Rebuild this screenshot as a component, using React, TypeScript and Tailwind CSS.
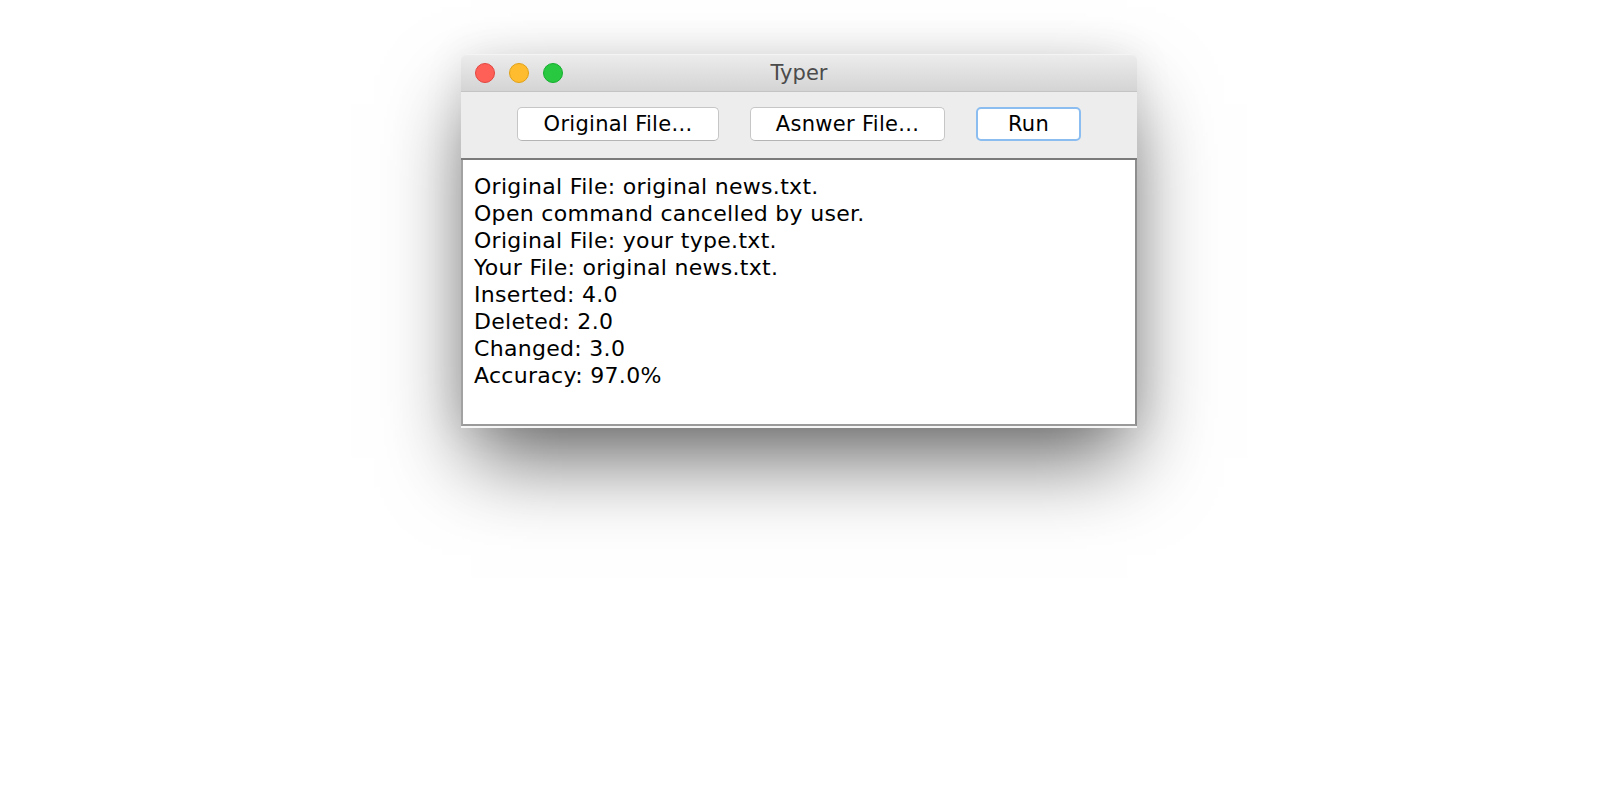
import React from 'react';

// Log lines shown in the output area of the Typer window.
const logLines = [
  'Original File: original news.txt.',
  'Open command cancelled by user.',
  'Original File: your type.txt.',
  'Your File: original news.txt.',
  'Inserted: 4.0',
  'Deleted: 2.0',
  'Changed: 3.0',
  'Accuracy: 97.0%',
];

const font = { fontFamily: '"DejaVu Sans", "Liberation Sans", sans-serif' };

const TrafficLights: React.FC = () => (
  <div className="flex items-center gap-[14px] pl-[14px]">
    <span className="h-[20px] w-[20px] rounded-full bg-[#fe5f57] border border-[#e2463f]" />
    <span className="h-[20px] w-[20px] rounded-full bg-[#febc2e] border border-[#e1a116]" />
    <span className="h-[20px] w-[20px] rounded-full bg-[#28c840] border border-[#14ae2e]" />
  </div>
);

const App: React.FC = () => {
  return (
    <div className="min-h-[800px] w-full bg-white flex justify-center pr-[2px] pt-[54px] font-['DejaVu_Sans',sans-serif]">
      <div className="w-[676px] h-[374px] flex flex-col rounded-t-[6px] bg-[#ececec] shadow-[0_40px_80px_-10px_rgba(0,0,0,0.6),0_0_40px_rgba(0,0,0,0.08)]">
        {/* title bar */}
        <div className="h-[38px] grid grid-cols-[1fr_auto_1fr] items-center rounded-t-[6px] border-t border-[#f4f4f4] border-b border-b-[#c4c4c4] bg-gradient-to-b from-[#ececec] to-[#d4d4d4]">
          <TrafficLights />
          <div className="text-[21px] text-[#4b4b4b] leading-none pt-[1px]">Typer</div>
          <div />
        </div>

        {/* toolbar */}
        <div className="h-[68px] flex justify-center gap-[31px] pt-[15px] border-b-2 border-[#7b7b7b] bg-[#ededed]">
          <button className="h-[34px] w-[202px] rounded-[5px] bg-white border border-[#c6c6c6] border-b-[#b4b4b4] text-[21px] tracking-[0.3px] text-black leading-none">
            Original File...
          </button>
          <button className="h-[34px] w-[195px] rounded-[5px] bg-white border border-[#c6c6c6] border-b-[#b4b4b4] text-[21px] tracking-[0.3px] text-black leading-none">
            Asnwer File...
          </button>
          <button className="h-[34px] w-[105px] rounded-[5px] bg-white border-2 border-[#8bbdf1] text-[21px] tracking-[0.3px] text-black leading-none">
            Run
          </button>
        </div>

        {/* output area */}
        <div className="flex-1 bg-white border-l-2 border-r-2 border-b-2 border-l-[#a2a2a2] border-r-[#8e8e8e] border-b-[#9a9a9a] pl-[11px] pt-[13px]">
          {logLines.map((line, i) => (
            <div key={i} className="text-[22px] tracking-[0.3px] leading-[27px] text-black" style={font}>
              {line}
            </div>
          ))}
        </div>
        <div className="h-[2px] bg-[#f6f6f6]" />
      </div>
    </div>
  );
};

export default App;
